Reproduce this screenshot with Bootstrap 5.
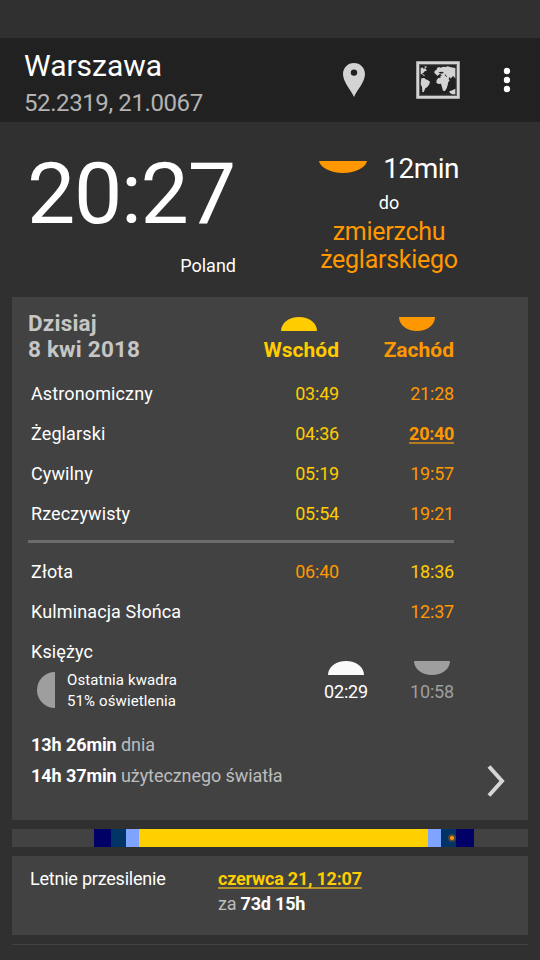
<!DOCTYPE html>
<html lang="pl">
<head>
<meta charset="utf-8">
<meta name="viewport" content="width=device-width, initial-scale=1">
<title>Warszawa</title>
<link rel="stylesheet" href="https://cdn.jsdelivr.net/npm/bootstrap@5.3.0/dist/css/bootstrap.min.css">
<style>
body{background:#303030;color:#fff;font-family:Roboto,"Noto Sans",sans-serif;font-size:18px;width:540px;height:960px;overflow:hidden;line-height:40px}
svg{display:block;flex:none}
.status-strip{height:38px}
.app-bar{background:#212121;height:84px;padding:0 28px 0 24px}
.city{font-size:30px;line-height:36px;margin-top:2px}
.coords{font-size:24px;line-height:36px;color:#b3b3b3;margin-top:1px;letter-spacing:-.4px}
.pin{margin-right:51px}.world{margin-right:42px}
.hero{height:175px;padding:0 16px 0 27px}
.clock-col{width:209px;padding-top:22px}
.clock{font-size:86px;line-height:100px;letter-spacing:-1.3px;text-align:left}
.zone{line-height:24px;margin-top:10px}
.next-col{width:140px;margin-right:65px;padding-top:30px}
.remain{font-size:28px;line-height:34px;letter-spacing:-.5px}
.until{line-height:24px;margin-top:5px}
.event-name{font-size:25px;line-height:28px;margin-top:3px;color:#ff9800;letter-spacing:-.26px}
.panel{background:#424242;margin:0 12px 9px}
.today{height:523px;padding:13px 74px 0 16px}
.today-head{height:64px}
.date{font-size:22.5px;line-height:26px;color:#c6c6c6;letter-spacing:.2px}
.col-time{width:115px;text-align:right;letter-spacing:-.2px}
.head-label{font-size:21px;line-height:26px;letter-spacing:0;margin-top:6px}
.head-icon{margin:7px 22px 0 auto}
.set-icon{margin-right:19px}
.rise{color:#fc0}.fall{color:#ff9800}.dim{color:#9e9e9e}.soft{color:#bdbdbd}
.label{padding-left:3px;letter-spacing:.12px}
.rule{height:3px;background:#6b6b6b;margin:6px 0 9px}
.now,.when{text-decoration:underline;text-decoration-thickness:2px;text-underline-offset:2px;text-decoration-skip-ink:none}
.now{text-decoration-color:#b77a1f;letter-spacing:-.3px}
.when{text-decoration-color:#b1902b;letter-spacing:-.22px}
.countdown{letter-spacing:-.2px}
.moon-row{height:97px}
.phase{font-size:15px;line-height:21px;margin:-2px 0 0 12px}
.moon-times{padding-top:29px;gap:36px;margin-right:-3px}
.moon-time{width:50px;line-height:24px;margin-top:5px;letter-spacing:-.2px}
.totals{line-height:31px;letter-spacing:-.08px}
.chev{margin:36px -51px 0 0}
.timeline{height:18px}
.solstice{height:79px;padding:10px 18px;line-height:25px}
.solstice-name{width:188px;letter-spacing:-.22px}
.next-panel{height:1px}
</style>
</head>
<body>
<div class="status-strip"></div>
<header class="app-bar d-flex align-items-center">
  <div class="me-auto align-self-start pt-2">
    <div class="city">Warszawa</div>
    <div class="coords">52.2319, 21.0067</div>
  </div>
  <svg class="pin" width="22" height="34" viewBox="0 0 22 34"><path fill="#d3d3d3" fill-rule="evenodd" d="M11 0C4.900 0 0 4.800 0 11c0 8 8 16 11 23 3-7 11-15 11-23C22 4.800 17.100 0 11 0zm0 6.400a3.200 3.200 0 1 1 0 6.400 3.200 3.200 0 0 1 0-6.400z"/></svg>
  <svg class="world" width="44" height="38" viewBox="0 0 132 114"><rect x="5" y="5" width="122" height="104" fill="none" stroke="#d3d3d3" stroke-width="9"/><path fill="none" stroke="#8b8b8b" stroke-width="1.500" d="M1 1H131V113H1zM11 11H121V103H11z"/><g fill="#d3d3d3"><path d="M14 22l6-3 2 4 6-1 5 7-6 1-5 6h-4l5 5 4 2-3 2-6-5-4-1zM24 17l7-1 2 3-5 2zM16 52l9-1 4 4 6 2 7 5-2 8-6 8-6 4-5 12-4-1-1-15-4-8z"/><path d="M55 36l1-7 6-3 1-5 6-3 5 2 7-3 8 1 6-2 10 3 13 2v32l-5-7-5 1-3 6-5-5-2 7 3 3-6 9-2 13-6 10-6-1-4-14-2-7-8 1-6-4 1-8 5-6 7-1-1-5 5-2-6-4-4 2-3 4zM92 68l4-3-1 9-4 3zM100 91l9-3 9-5v17h-10l-7-5z"/></g><path d="M67 34l12-2 5 4-10 2zM88 40l5 7-2 1-5-7z" fill="#212121"/></svg>
  <svg width="10" height="26" viewBox="0 0 10 26" fill="#fff"><circle cx="5" cy="4" r="3.200"/><circle cx="5" cy="13" r="3.200"/><circle cx="5" cy="22" r="3.200"/></svg>
</header>

<main>
  <section class="hero d-flex justify-content-between">
    <div class="clock-col text-end">
      <div class="clock text-nowrap">20:27</div>
      <div class="zone">Poland</div>
    </div>
    <div class="next-col text-center">
      <div class="remain d-flex justify-content-between">
        <svg class="mt-2" width="48" height="13" viewBox="0 0 48 13"><path fill="#ff9800" d="M0 1h48C47 7 37 13 24 13S1 7 0 1z"/></svg>
        <span>12min</span>
      </div>
      <div class="until">do</div>
      <div class="event-name">zmierzchu<br>żeglarskiego</div>
    </div>
  </section>

  <section class="panel today">
    <div class="today-head d-flex">
      <div class="date fw-bold me-auto">Dzisiaj<br>8 kwi 2018</div>
      <div class="col-time rise">
        <svg class="head-icon" width="36" height="14" viewBox="0 0 36 14"><path fill="#fc0" d="M0 14C0 6 8 0 18 0s18 6 18 14z"/></svg>
        <div class="head-label fw-bold">Wschód</div>
      </div>
      <div class="col-time fall">
        <svg class="head-icon set-icon" width="36" height="14" viewBox="0 0 36 14"><path fill="#ff9800" d="M0 0C0 8 8 14 18 14S36 8 36 0z"/></svg>
        <div class="head-label fw-bold">Zachód</div>
      </div>
    </div>
    <div class="d-flex"><div class="label me-auto">Astronomiczny</div><div class="col-time rise">03:49</div><div class="col-time fall">21:28</div></div>
    <div class="d-flex"><div class="label me-auto">Żeglarski</div><div class="col-time rise">04:36</div><div class="col-time fall"><span class="now fw-bold">20:40</span></div></div>
    <div class="d-flex"><div class="label me-auto">Cywilny</div><div class="col-time rise">05:19</div><div class="col-time fall">19:57</div></div>
    <div class="d-flex"><div class="label me-auto">Rzeczywisty</div><div class="col-time rise">05:54</div><div class="col-time fall">19:21</div></div>
    <div class="rule"></div>
    <div class="d-flex"><div class="label me-auto">Złota</div><div class="col-time fall">06:40</div><div class="col-time rise">18:36</div></div>
    <div class="d-flex"><div class="label me-auto">Kulminacja Słońca</div><div class="col-time fall">12:37</div></div>
    <div class="moon-row d-flex">
      <div class="label me-auto">
        <div>Księżyc</div>
        <div class="d-flex">
          <svg class="ms-1" width="20" height="36" viewBox="0 0 20 36"><path fill="#9e9e9e" d="M20 0A18 18 0 0 0 20 36z"/></svg>
          <div class="phase">Ostatnia kwadra<br>51% oświetlenia</div>
        </div>
      </div>
      <div class="moon-times d-flex text-center">
        <div>
          <svg class="mx-auto" width="36" height="14" viewBox="0 0 36 14"><path fill="#fafafa" d="M0 14C0 6 8 0 18 0s18 6 18 14z"/></svg>
          <div class="moon-time">02:29</div>
        </div>
        <div>
          <svg class="mx-auto" width="36" height="14" viewBox="0 0 36 14"><path fill="#9e9e9e" d="M0 0C0 8 8 14 18 14S36 8 36 0z"/></svg>
          <div class="moon-time dim">10:58</div>
        </div>
      </div>
    </div>
    <div class="d-flex">
      <div class="totals label me-auto soft">
        <div><b class="text-white">13h 26min</b> dnia</div>
        <div><b class="text-white">14h 37min</b> użytecznego światła</div>
      </div>
      <svg class="chev" width="18" height="32" viewBox="0 0 18 32"><path fill="none" stroke="#d6d6d6" stroke-width="4" d="M2 1.500L15 16 2 30.500"/></svg>
    </div>
  </section>

  <section class="panel timeline">
    <svg width="516" height="18" viewBox="0 0 516 18" shape-rendering="crispEdges">
      <path fill="#000066" d="M82 0h17v18H82zM444 0h18v18h-18z"/>
      <path fill="#003366" d="M99 0h15v18H99zM429 0h15v18h-15z"/>
      <path fill="#7fa4ff" d="M114 0h13v18h-13zM416 0h13v18h-13z"/>
      <path fill="#ffd000" d="M127 0h289v18H127z"/>
      <circle shape-rendering="auto" cx="440" cy="9" r="3" fill="#ff9800" stroke="#51483f" stroke-width="1.800"/>
    </svg>
  </section>

  <section class="panel solstice d-flex">
    <div class="solstice-name">Letnie przesilenie</div>
    <div><span class="when rise fw-bold">czerwca 21, 12:07</span><br><span class="countdown"><span class="soft">za</span> <b>73d 15h</b></span></div>
  </section>
  <section class="panel next-panel"></section>
</main>
<script src="https://cdn.jsdelivr.net/npm/bootstrap@5.3.0/dist/js/bootstrap.bundle.min.js"></script>
</body>
</html>
